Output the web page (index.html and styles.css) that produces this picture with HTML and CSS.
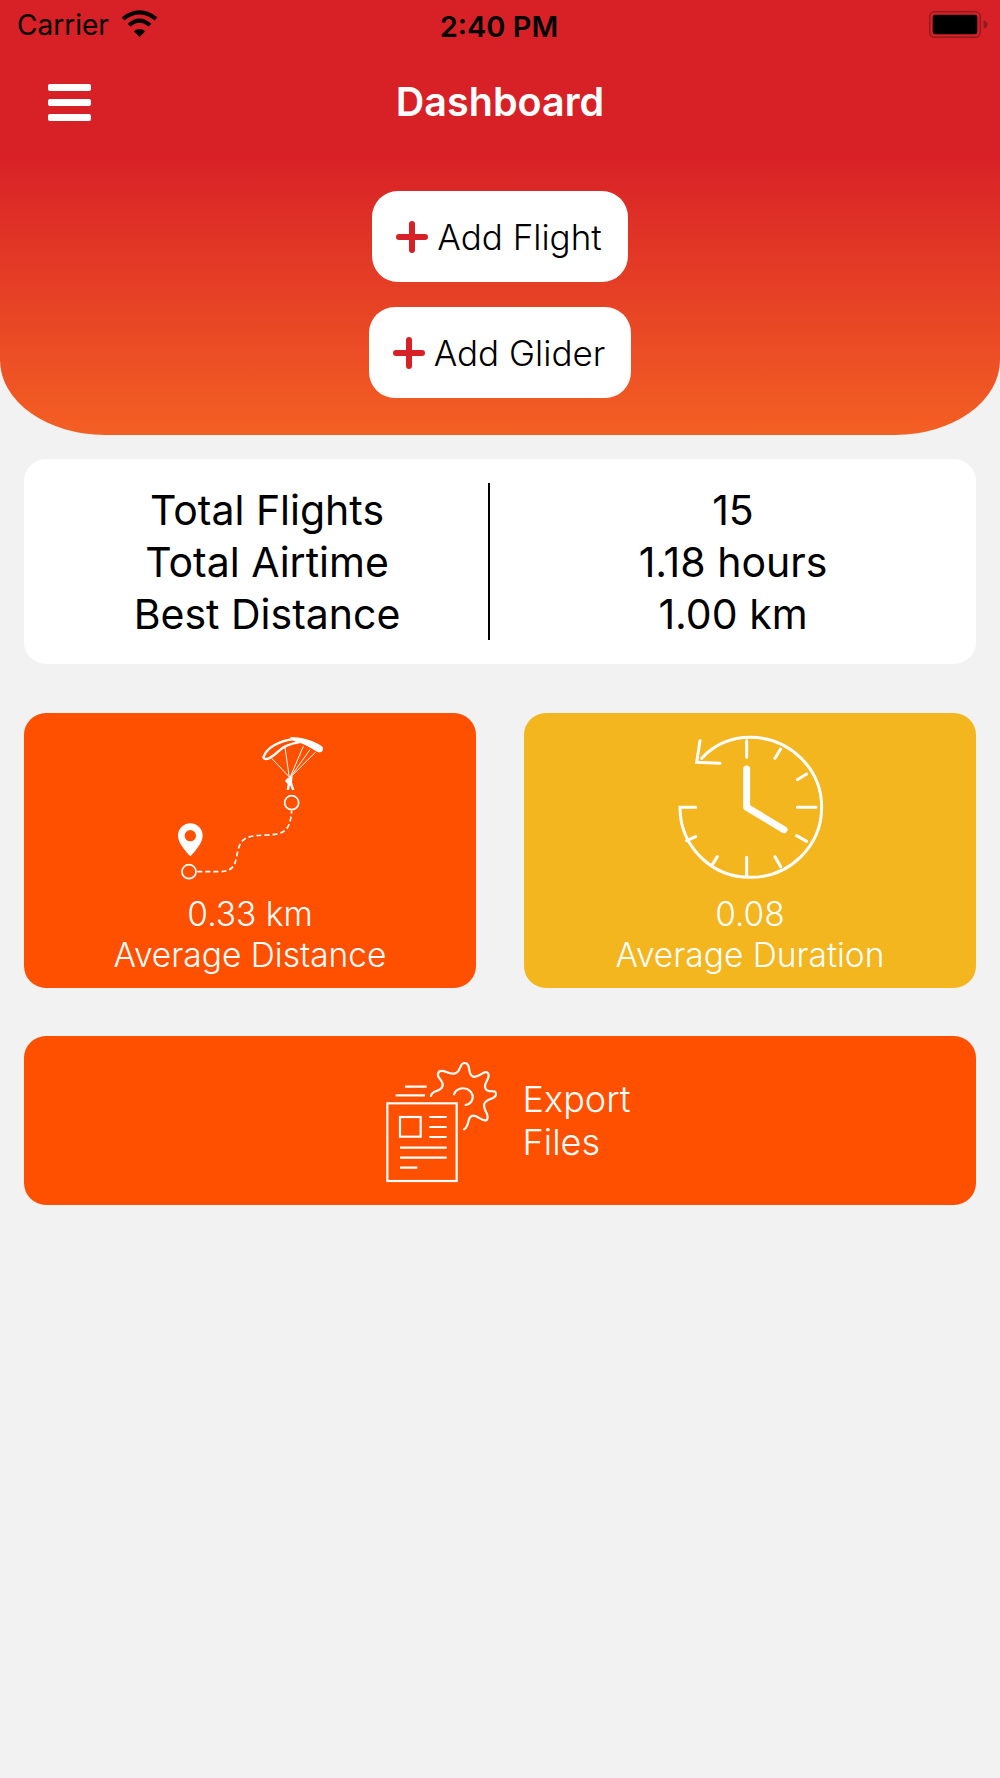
FILE: index.html
```html
<!DOCTYPE html>
<html lang="en">

<head>
    <meta charset="utf-8">
    <meta name="viewport" content="width=device-width, initial-scale=1.0">
    <title>Dashboard</title>
    <link rel="stylesheet" href="styles.css">
</head>

<body>
    <header class="top">
        <div class="statusbar">
            <div class="carrier">
                <span>Carrier</span>
                <svg class="wifi" viewBox="0 0 110 80">
                    <path d="M6 26 Q55 -12 104 26" fill="none" stroke="#000" stroke-width="12" />
                    <path d="M24 45 Q55 18 86 45" fill="none" stroke="#000" stroke-width="12" />
                    <path d="M38 63 Q55 50 72 63 L55 80 Z" fill="#000" />
                </svg>
            </div>
            <div class="time">2:40 PM</div>
            <svg class="battery" viewBox="0 0 176 80">
                <rect x="2" y="2" width="151" height="76" rx="14" fill="none" stroke="#8f1a1f" stroke-width="4" />
                <rect x="11" y="11" width="133" height="58" rx="7" fill="#000" />
                <path d="M163 27 Q175 32 175 40 Q175 48 163 53 Z" fill="#8f1a1f" />
            </svg>
        </div>
        <nav class="navbar">
            <div class="burger"><span></span><span></span><span></span></div>
            <h1>Dashboard</h1>
        </nav>
        <div class="actions">
            <button class="add-btn">
                <svg class="plus" viewBox="0 0 32 32"><path d="M16 3V29M3 16H29" /></svg>
                Add Flight
            </button>
            <button class="add-btn">
                <svg class="plus" viewBox="0 0 32 32"><path d="M16 3V29M3 16H29" /></svg>
                Add Glider
            </button>
        </div>
    </header>

    <main class="content">
        <section class="totals">
            <div class="totals-labels">
                <p>Total Flights</p>
                <p>Total Airtime</p>
                <p>Best Distance</p>
            </div>
            <div class="totals-values">
                <p>15</p>
                <p>1.18 hours</p>
                <p>1.00 km</p>
            </div>
        </section>

        <section class="cards">
            <article class="card orange">
                <svg class="card-icon route" viewBox="-30 0 660 525">
                    <g fill="none" stroke="#fff">
                        <circle cx="117" cy="458" r="21" stroke-width="5" />
                        <circle cx="425" cy="251" r="21" stroke-width="5" />
                        <path d="M142 458H205C262 458 255 425 265 390C275 350 305 350 350 348C405 346 420 335 425 275" stroke-width="5" stroke-dasharray="15 9" />
                        <path d="M340 115C350 85 390 65 432 60L445 70C420 74 400 82 385 97C368 114 345 128 340 115Z" stroke-width="7" />
                        <path d="M420 176L365 118M418 176L405 85M420 176L460 82M420 176L480 92M420 176L496 100" stroke-width="3" />
                    </g>
                    <g fill="#fff">
                        <path fill-rule="evenodd" d="M121 313C100 313 84 330 84 350C84 372 108 398 121 412C134 398 158 372 158 350C158 330 142 313 121 313ZM121 333A17 17 0 1 1 121 367A17 17 0 1 1 121 333Z" />
                        <path d="M420 54C460 54 500 68 518 84C522 100 510 104 498 97C480 85 460 73 432 66Z" />
                        <path d="M412 178L428 172L426 190L433 213L426 213L420 198L417 213L410 213L413 195L405 186Z" />
                    </g>
                </svg>
                <div class="card-text">
                    <p>0.33 km</p>
                    <p>Average Distance</p>
                </div>
            </article>
            <article class="card yellow">
                <svg class="card-icon clock" viewBox="0 -15 540 525">
                    <g fill="none" stroke="#fff" stroke-linecap="round">
                        <path d="M125 103C165 60 215 40 271 40C389 40 485 134 485 250C485 366 389 460 271 460C153 460 60 366 60 250H107" stroke-width="9" />
                        <path d="M120 50L110 115L180 118" stroke-width="9" />
                        <path d="M260 50V100M345 103L362 75M412 167L440 150M412 250H468M410 335L440 352M345 398L362 428M260 400V455M155 425L172 398M80 350L107 338" stroke-width="9" />
                        <path d="M260 135V250L372 317" stroke-width="21" stroke-linejoin="round" />
                    </g>
                </svg>
                <div class="card-text">
                    <p>0.08</p>
                    <p>Average Duration</p>
                </div>
            </article>
        </section>

        <section class="export orange">
            <svg class="export-icon" viewBox="0 0 390 420">
                <g fill="none" stroke="#fff" stroke-width="6.5">
                    <rect x="52" y="157" width="208" height="233" />
                    <rect x="90" y="198" width="62" height="59" />
                    <path d="M178 198H230M178 228H230M178 258H230M90 290H230M90 320H230M90 350H142M105 107H170M77 133H165" />
                    <path d="M183 135C185 115 215 125 218 103C220 85 195 80 207 62C220 50 240 78 260 65C275 55 268 35 285 36C305 38 290 70 310 77C328 82 345 52 355 68C362 85 335 100 348 115C358 128 378 112 378 130C376 148 345 140 342 162C340 180 362 192 350 207C335 215 322 188 305 195C290 202 300 225 282 235" stroke-linecap="round" />
                    <path d="M252 130C258 112 285 105 300 120C315 135 308 158 287 162" stroke-linecap="round" />
                </g>
            </svg>
            <p class="export-text">Export<br>Files</p>
        </section>
    </main>
</body></html>
```

FILE: styles.css
```css
* {
    box-sizing: border-box;
}

body {
    margin: 0;
    min-height: 1778px;
    background-color: #f2f2f2;
    font-family: "Inter", "Liberation Sans", sans-serif;
}

p,
h1 {
    margin: 0;
}

.top {
    height: 435px;
    border-radius: 0 0 105px 105px / 0 0 75px 75px;
    background: linear-gradient(#d82027 0, #d82027 150px, #f36023 435px);
}

.statusbar {
    display: grid;
    grid-template-columns: 1fr auto 1fr;
    align-items: center;
    height: 50px;
    padding: 0 19px 0 17px;
    color: #000;
}

.carrier {
    display: flex;
    align-items: center;
    gap: 12px;
    font-size: 28px;
}

.wifi {
    width: 37px;
    height: 27px;
    margin-top: -3px;
}

.time {
    padding-top: 3px;
    font-size: 29px;
    font-weight: 600;
}

.battery {
    justify-self: end;
    width: 59px;
    height: 27px;
    margin-right: -7px;
    margin-top: -2px;
}

.navbar {
    display: grid;
    grid-template-columns: 1fr auto 1fr;
    align-items: center;
    height: 104px;
    padding: 0 48px;
}

.navbar h1 {
    color: #fff;
    font-size: 39.5px;
    font-weight: 600;
}

.burger {
    display: flex;
    flex-direction: column;
    gap: 8px;
    width: 43px;
}

.burger span {
    height: 7px;
    border-radius: 2px;
    background-color: #fff;
}

.actions {
    display: flex;
    flex-direction: column;
    align-items: center;
    gap: 25px;
    margin-top: 37px;
}

.add-btn {
    display: flex;
    align-items: center;
    gap: 9px;
    height: 91px;
    padding: 0 26px 0 24px;
    border: 0;
    border-radius: 26px;
    background-color: #fff;
    color: #000;
    font-family: inherit;
    font-size: 35px;
    font-weight: 300;
}

.plus {
    width: 32px;
    height: 32px;
    fill: none;
    stroke: #d82027;
    stroke-width: 6;
    stroke-linecap: round;
}

.content {
    padding: 24px;
}

.totals {
    display: grid;
    grid-template-columns: 442px 1fr;
    height: 205px;
    padding: 24px 0 24px 22px;
    border-radius: 22px;
    background-color: #fff;
    font-size: 41px;
    line-height: 52px;
    text-align: center;
}

.totals-labels p,
.totals-values p {
    position: relative;
    top: 1px;
}

.totals-values {
    border-left: 2px solid #000;
}

.cards {
    display: grid;
    grid-template-columns: 1fr 1fr;
    gap: 48px;
    margin-top: 49px;
}

.card {
    display: flex;
    flex-direction: column;
    align-items: center;
    height: 275px;
    padding-top: 6px;
    border-radius: 22px;
    color: #fff;
}

.orange {
    background-color: #ff5000;
}

.yellow {
    background-color: #f3b61f;
}

.route {
    width: 220px;
    height: 175px;
}

.clock {
    width: 180px;
    height: 175px;
}

.card-text {
    font-size: 33.5px;
    font-weight: 300;
    line-height: 41px;
    text-align: center;
}

.export {
    display: flex;
    justify-content: center;
    align-items: center;
    gap: 23px;
    height: 169px;
    margin-top: 48px;
    border-radius: 22px;
    color: #fff;
}

.export-icon {
    width: 130px;
    height: 140px;
}

.export-text {
    font-size: 36px;
    font-weight: 300;
    line-height: 43px;
}
```
